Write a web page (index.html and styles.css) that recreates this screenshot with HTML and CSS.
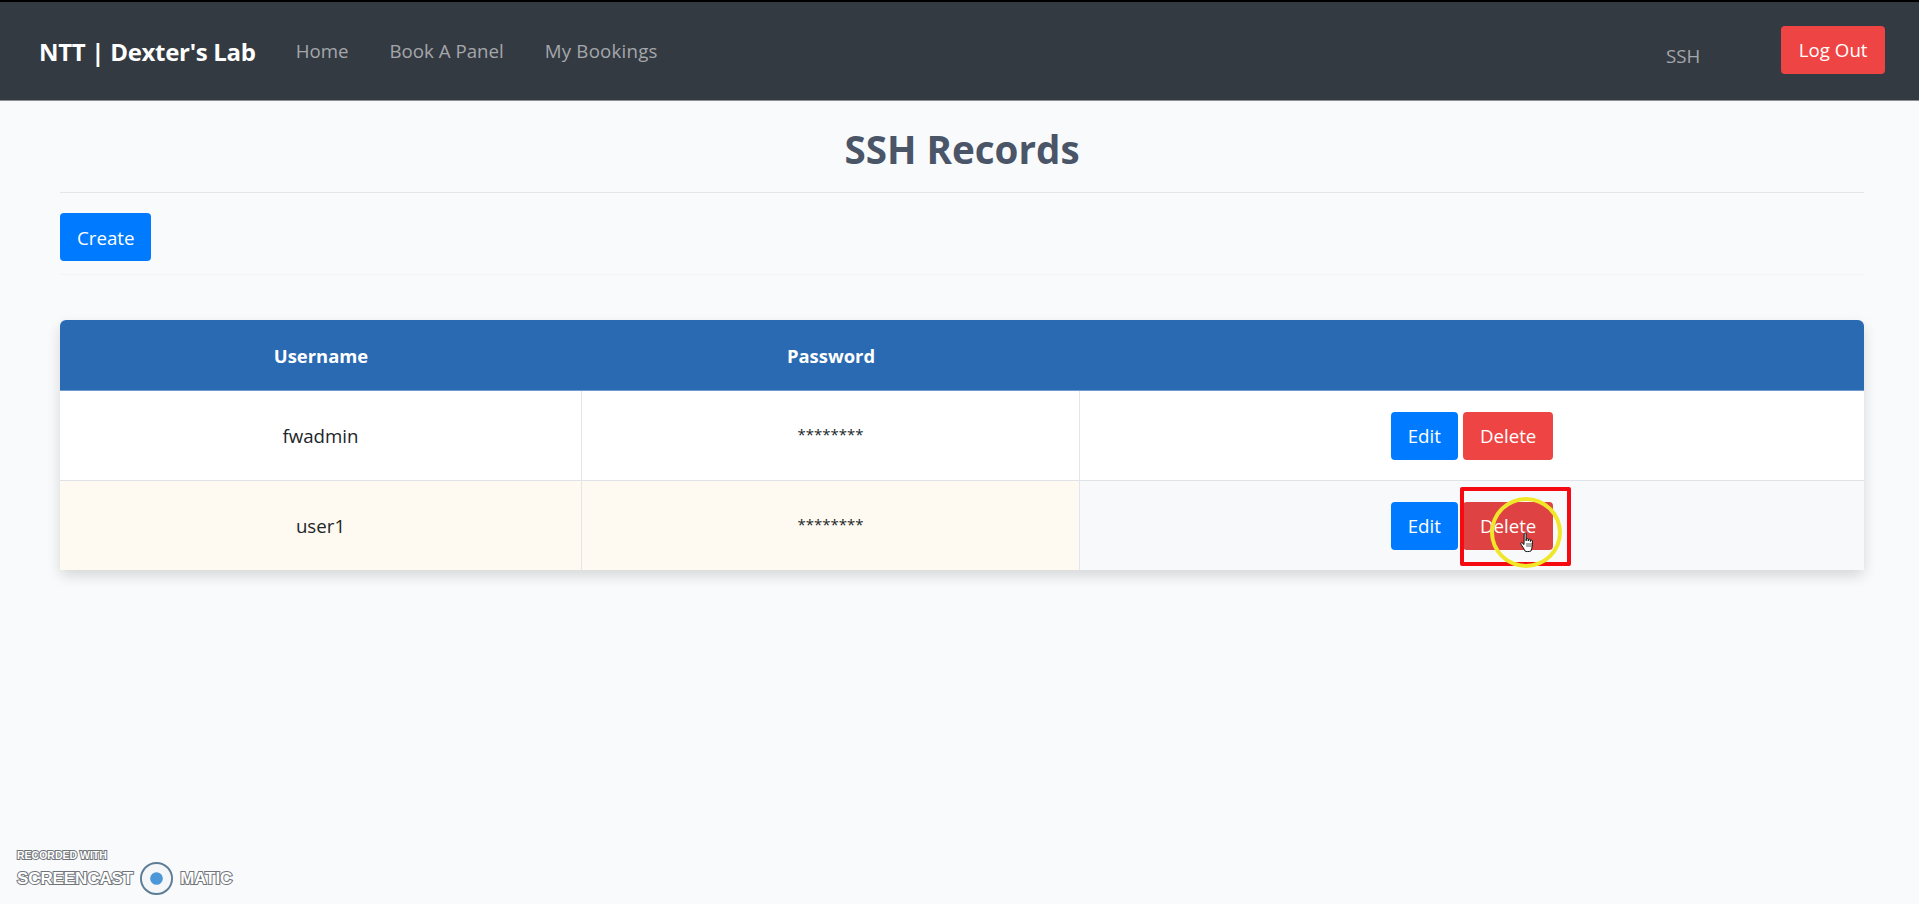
FILE: index.html
```html
<!DOCTYPE html>
<html lang="en">
<head>
<meta charset="utf-8">
<title>SSH Records</title>
<link rel="stylesheet" href="styles.css">
</head>
<body>
<nav class="navbar">
  <a class="brand" href="#">NTT | Dexter's Lab</a>
  <ul class="nav-links">
    <li><a href="#">Home</a></li>
    <li><a href="#">Book A Panel</a></li>
    <li><a href="#">My Bookings</a></li>
  </ul>
  <a class="nav-ssh" href="#">SSH</a>
  <button class="btn btn-red btn-logout">Log Out</button>
</nav>
<main class="container">
  <h1 class="title">SSH Records</h1>
  <div class="toolbar">
    <button class="btn btn-blue">Create</button>
  </div>
  <table class="records">
    <colgroup>
      <col class="col-user"><col class="col-pass"><col>
    </colgroup>
    <thead>
      <tr><th>Username</th><th>Password</th><th></th></tr>
    </thead>
    <tbody>
      <tr>
        <td>fwadmin</td>
        <td class="secret">********</td>
        <td class="actions"><button class="btn btn-blue">Edit</button><button class="btn btn-red">Delete</button></td>
      </tr>
      <tr class="alt">
        <td class="warm">user1</td>
        <td class="warm secret">********</td>
        <td class="actions"><button class="btn btn-blue">Edit</button><button class="btn btn-red btn-hover">Delete</button></td>
      </tr>
    </tbody>
  </table>
</main>
<div class="highlight-box"></div>
<div class="cursor-ring"></div>
<svg class="cursor" viewBox="0 0 16 22" aria-hidden="true">
  <path d="M4.2 1.6c0-.9 1.9-.9 1.9 0v7.2l.2-1.6c.1-.9 1.8-.9 1.9.1l.1 1.7.2-1.3c.2-.9 1.8-.8 1.8.2l.1 1.6.3-.9c.3-.8 1.7-.6 1.7.4 0 2.6.2 5-.6 7.200l-.7 2.700c-2 .9-5 .9-6.300 0-.6-2.200-2.500-4.400-3.800-6.600-.6-1-.1-2 1.100-1.500l1.900 1.800z" fill="#fff" stroke="#111" stroke-width="1" stroke-linejoin="round"/>
  <path d="M7 11v4M9 11v4M11 11v4" stroke="#111" stroke-width=".7" fill="none"/>
</svg>
<div class="watermark">
  <div class="wm-top">RECORDED WITH</div>
  <div class="wm-row">
    <span>SCREENCAST</span>
    <svg class="wm-logo" viewBox="0 0 36 36" aria-hidden="true">
      <circle cx="18" cy="18" r="15" fill="#f4f6f8" stroke="#5d7d96" stroke-width="4"/>
      <circle cx="18" cy="18" r="6.500" fill="#4b97d8"/>
    </svg>
    <span>MATIC</span>
  </div>
</div>
</body>
</html>
```
FILE: styles.css
```css
* { box-sizing: border-box; }
html, body { margin: 0; height: 100%; }
body {
  position: relative;
  height: 904px;
  overflow: hidden;
  background: #f9fafc;
  font-family: "Open Sans", "Noto Sans", sans-serif;
  font-size: 18.7px;
  color: #212529;
}
.navbar {
  display: flex;
  align-items: center;
  height: 101px;
  padding: 0 34px 0 39px;
  background: #343a42;
  border-top: 2px solid #000;
  border-bottom: 1px solid #8a8f95;
}
.brand {
  color: #fff;
  font-size: 24px;
  font-weight: 700;
  letter-spacing: -0.3px;
  text-decoration: none;
  margin-right: 40px;
}
.nav-links {
  display: flex;
  gap: 41px;
  margin: 0 0 2px;
  padding: 0;
  list-style: none;
}
.nav-links a, .nav-ssh {
  color: #a4a7ab;
  text-decoration: none;
  font-size: 18.7px;
}
.nav-links li:last-child a { letter-spacing: 0.2px; }
.nav-ssh { margin-left: auto; margin-right: 81px; padding-top: 8px; }
.btn {
  height: 48px;
  padding: 0 17px;
  border: 0;
  border-radius: 4px;
  color: #fff;
  font-family: inherit;
  font-size: 18.7px;
  cursor: pointer;
}
.btn-blue { background: #007bff; }
.btn-red { background: #ef4444; }
.btn-hover { background: #de4242; }
.btn-logout { margin-bottom: 3px; padding: 0 17.500px; }
.container { padding: 0 55px 0 60px; }
.title {
  margin: 0;
  height: 92px;
  padding-top: 22px;
  text-align: center;
  color: #4a5568;
  font-size: 38.6px;
  font-weight: 700;
  line-height: 52px;
  border-bottom: 1px solid #e3e5e8;
}
.toolbar {
  height: 82px;
  padding-top: 20px;
  margin-bottom: 45px;
  border-bottom: 1px solid #f3f4f6;
}
.records {
  width: 100%;
  border-collapse: separate;
  border-spacing: 0;
  table-layout: fixed;
  border-radius: 6px;
  box-shadow: 0 6px 14px rgba(0, 0, 0, .14);
  background: #fff;
}
.col-user { width: 522px; }
.col-pass { width: 498px; }
.records th {
  height: 71px;
  padding-top: 2px;
  background: #2a6ab2;
  color: #fff;
  font-size: 18.4px;
  font-weight: 700;
  border-bottom: 1px solid #6f9bd0;
}
.records th:first-child { border-top-left-radius: 6px; }
.records th:last-child { border-top-right-radius: 6px; }
.records td {
  height: 90px;
  padding-top: 1px;
  text-align: center;
  border-bottom: 1px solid #dfe2e6;
  border-right: 1px solid #e3e5e8;
}
.records td:last-child { border-right: 0; }
.records tbody tr:last-child td { border-bottom: 0; height: 89px; }
.records td.secret { padding-top: 0; padding-bottom: 3px; font-size: 15px; }
.alt td { background: #f8f9fb; }
.alt td.warm { background: #fffaf1; }
.actions { white-space: nowrap; }
.actions .btn + .btn { margin-left: 5px; }
.highlight-box {
  position: absolute;
  left: 1460px;
  top: 487px;
  width: 111px;
  height: 79px;
  border: 4px solid #f50a12;
  border-radius: 2px;
}
.cursor-ring {
  position: absolute;
  left: 1490px;
  top: 497px;
  width: 72px;
  height: 71px;
  border: 4px solid #f0e62a;
  border-radius: 50%;
}
.cursor {
  position: absolute;
  left: 1520px;
  top: 531px;
  width: 16px;
  height: 24px;
}
.watermark {
  position: absolute;
  left: 17px;
  top: 849px;
  color: #fff;
  font-family: "Liberation Sans", sans-serif;
  font-weight: 700;
  -webkit-text-stroke: 2px #70757a;
  paint-order: stroke fill;
}
.wm-top { font-size: 10.500px; line-height: 12px; }
.wm-row {
  display: flex;
  align-items: center;
  font-size: 17px;
  line-height: 35px;
  letter-spacing: -0.1px;
}
.wm-logo { width: 35px; height: 35px; margin: 0 6px; }
```
